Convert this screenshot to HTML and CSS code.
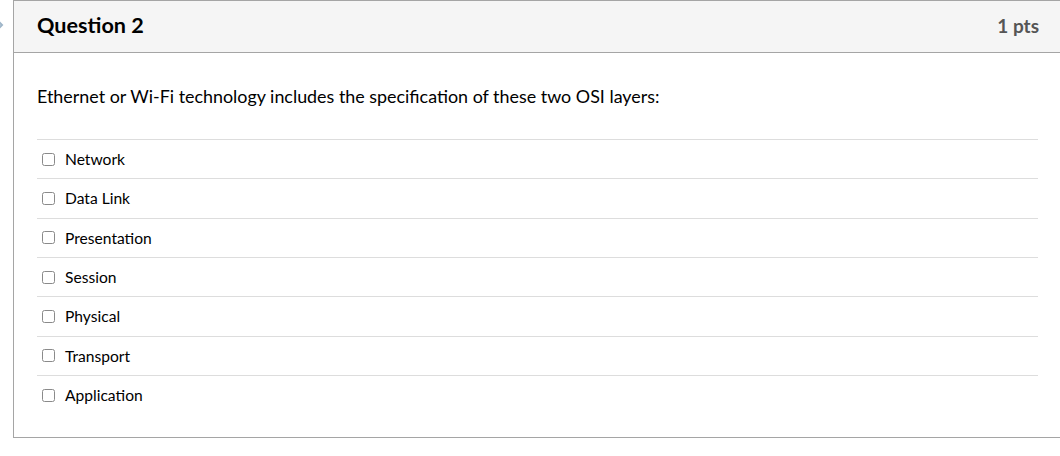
FILE: index.html
```html
<!DOCTYPE html>
<html lang="en">
<head>
<meta charset="utf-8">
<title>Question 2</title>
<link rel="stylesheet" href="styles.css">
</head>
<body>
<div class="page">
  <div class="gutter">
    <svg class="chev" width="8" height="12" viewBox="0 0 8 12"><path d="M1 1 L6 6 L1 11" fill="none" stroke="#9fb6c9" stroke-width="2"/></svg>
  </div>
  <div class="card">
    <div class="card-header">
      <h2 class="title">Question 2</h2>
      <span class="pts">1 pts</span>
    </div>
    <div class="card-body">
      <p class="prompt">Ethernet or Wi-Fi technology includes the specification of these two OSI layers:</p>
      <ul class="answers">
        <li class="answer"><span class="box"></span><span class="label">Network</span></li>
        <li class="answer"><span class="box"></span><span class="label">Data Link</span></li>
        <li class="answer"><span class="box"></span><span class="label">Presentation</span></li>
        <li class="answer"><span class="box"></span><span class="label">Session</span></li>
        <li class="answer"><span class="box"></span><span class="label">Physical</span></li>
        <li class="answer"><span class="box"></span><span class="label">Transport</span></li>
        <li class="answer"><span class="box"></span><span class="label">Application</span></li>
      </ul>
    </div>
  </div>
</div>
</body>
</html>
```
FILE: styles.css
```css
html, body {
  margin: 0;
  padding: 0;
  background: #fff;
  overflow: hidden;
}
body {
  font-family: Lato, "Open Sans", sans-serif;
  color: #2d3b45;
  width: 1060px;
  height: 456px;
}
.page {
  display: flex;
  align-items: flex-start;
}
.gutter {
  width: 13px;
  flex: none;
  padding-top: 19px;
}
.chev {
  display: block;
  margin-left: -4px;
}
.card {
  flex: none;
  width: 1048px;
  border: 1px solid #a5a5a5;
}
.card-header {
  height: 51px;
  background: #f5f5f5;
  border-bottom: 1px solid #a5a5a5;
  display: flex;
  align-items: center;
  justify-content: space-between;
  padding: 0 23px 0 23px;
}
.title {
  margin: 0;
  font-size: 21.6px;
  font-weight: 700;
  color: #000;
  padding-bottom: 4px;
}
.pts {
  font-size: 19px;
  font-weight: 700;
  color: #555;
  padding-bottom: 2px;
}
.card-body {
  padding: 31px 24px 23px 23px;
}
.prompt {
  margin: 0 0 31px;
  font-size: 17.9px;
  line-height: 24px;
  color: #000;
}
.answers {
  list-style: none;
  margin: 0;
  padding: 0;
}
.answer {
  height: 38.33px;
  border-top: 1px solid #dddddd;
  display: flex;
  align-items: center;
  padding-left: 5px;
  gap: 10px;
  font-size: 15.6px;
  color: #000;
}
.box {
  width: 11px;
  height: 11px;
  border: 1px solid #8a8a8a;
  border-radius: 2.5px;
  background: #fff;
}
```
